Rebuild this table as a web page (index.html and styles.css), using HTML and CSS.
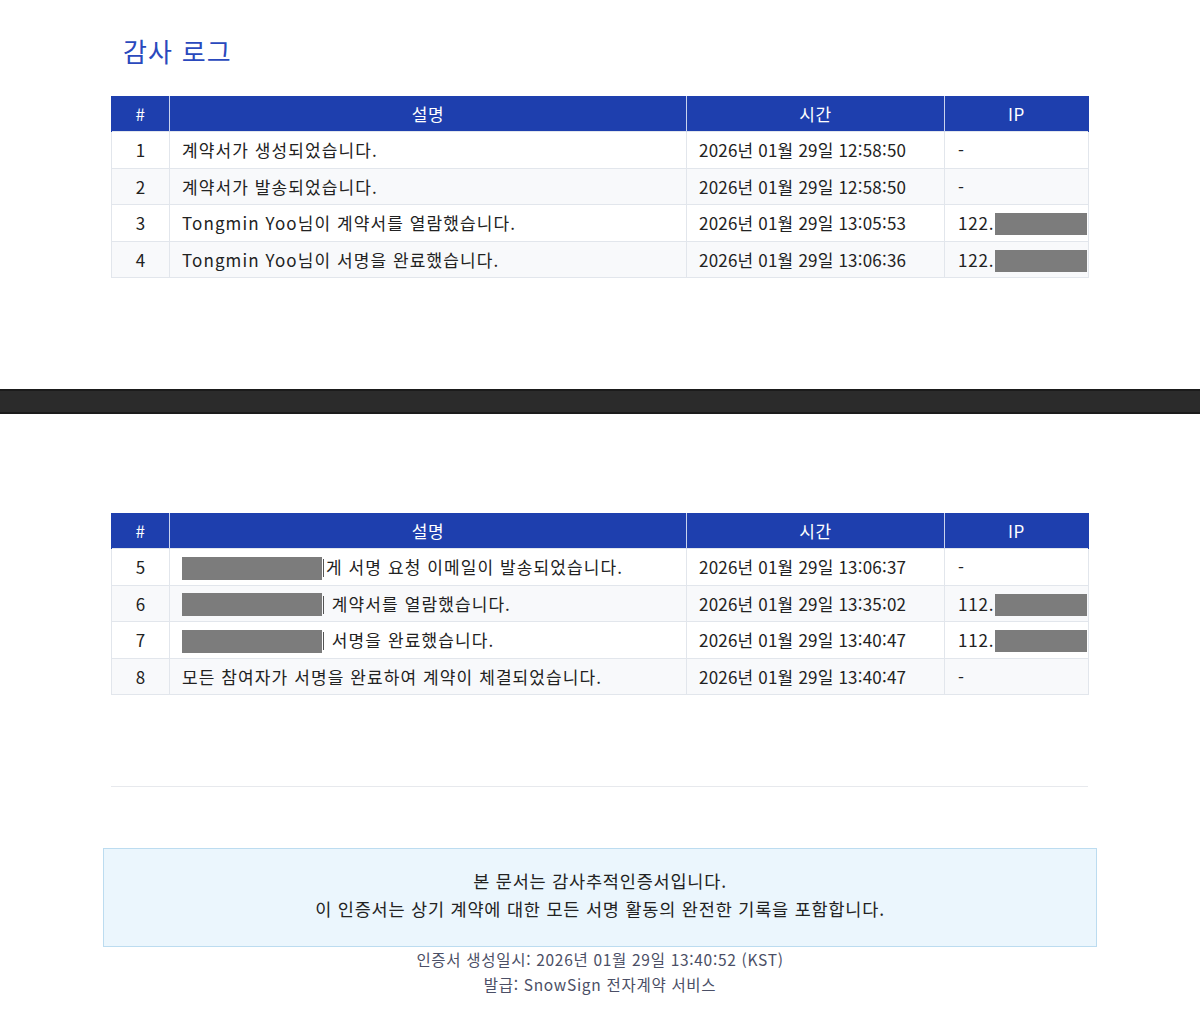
FILE: index.html
```html
<!DOCTYPE html>
<html lang="ko">
<head>
<meta charset="utf-8">
<title>감사 로그</title>
<link rel="stylesheet" href="styles.css">
</head>
<body>
<section class="sheet sheet-top">
  <div class="content">
    <h2 class="title">감사 로그</h2>
    <table class="log">
      <colgroup><col class="c-num"><col class="c-desc"><col class="c-time"><col class="c-ip"></colgroup>
      <thead>
        <tr><th>#</th><th>설명</th><th>시간</th><th>IP</th></tr>
      </thead>
      <tbody>
        <tr><td class="num">1</td><td class="desc">계약서가 생성되었습니다.</td><td class="time">2026년 01월 29일 12:58:50</td><td class="ip">-</td></tr>
        <tr><td class="num">2</td><td class="desc">계약서가 발송되었습니다.</td><td class="time">2026년 01월 29일 12:58:50</td><td class="ip">-</td></tr>
        <tr><td class="num">3</td><td class="desc">Tongmin Yoo님이 계약서를 열람했습니다.</td><td class="time">2026년 01월 29일 13:05:53</td><td class="ip">122.<span class="redact ip-redact"></span></td></tr>
        <tr><td class="num">4</td><td class="desc">Tongmin Yoo님이 서명을 완료했습니다.</td><td class="time">2026년 01월 29일 13:06:36</td><td class="ip">122.<span class="redact ip-redact"></span></td></tr>
      </tbody>
    </table>
  </div>
</section>
<div class="page-break"></div>
<section class="sheet sheet-bottom">
  <div class="content">
    <table class="log">
      <colgroup><col class="c-num"><col class="c-desc"><col class="c-time"><col class="c-ip"></colgroup>
      <thead>
        <tr><th>#</th><th>설명</th><th>시간</th><th>IP</th></tr>
      </thead>
      <tbody>
        <tr><td class="num">5</td><td class="desc"><span class="redact name-redact"></span><span class="frag"></span>게 서명 요청 이메일이 발송되었습니다.</td><td class="time">2026년 01월 29일 13:06:37</td><td class="ip">-</td></tr>
        <tr><td class="num">6</td><td class="desc"><span class="redact name-redact"></span><span class="frag"></span> 계약서를 열람했습니다.</td><td class="time">2026년 01월 29일 13:35:02</td><td class="ip">112.<span class="redact ip-redact"></span></td></tr>
        <tr><td class="num">7</td><td class="desc"><span class="redact name-redact"></span><span class="frag"></span> 서명을 완료했습니다.</td><td class="time">2026년 01월 29일 13:40:47</td><td class="ip">112.<span class="redact ip-redact"></span></td></tr>
        <tr><td class="num">8</td><td class="desc">모든 참여자가 서명을 완료하여 계약이 체결되었습니다.</td><td class="time">2026년 01월 29일 13:40:47</td><td class="ip">-</td></tr>
      </tbody>
    </table>
    <hr class="divider">
  </div>
  <div class="notice">
    <p>본 문서는 감사추적인증서입니다.</p>
    <p>이 인증서는 상기 계약에 대한 모든 서명 활동의 완전한 기록을 포함합니다.</p>
  </div>
  <div class="meta">
    <p>인증서 생성일시: 2026년 01월 29일 13:40:52 (KST)</p>
    <p>발급: SnowSign 전자계약 서비스</p>
  </div>
</section>
</body>
</html>
```

FILE: styles.css
```css
* { box-sizing: border-box; }

html, body {
  margin: 0;
  padding: 0;
  background: #ffffff;
}

body {
  font-family: "Noto Sans CJK KR", "Noto Sans", sans-serif;
  color: #222;
}

.sheet {
  background: #fff;
}

.sheet-top {
  height: 389px;
  padding-top: 35px;
}

.content {
  width: 977px;
  margin: 0 0 0 111px;
}

.title {
  margin: 0 0 0 12px;
  font-size: 26px;
  line-height: 32px;
  font-weight: 400;
  letter-spacing: 1.2px;
  color: #2a49bd;
}

.log {
  margin-top: 29px;
  width: 977px;
  border-collapse: collapse;
  table-layout: fixed;
  font-size: 17px;
}

.sheet-bottom .log {
  margin-top: 0;
}

.c-num { width: 58px; }
.c-desc { width: 517px; }
.c-time { width: 258px; }
.c-ip { width: 144px; }

.log th {
  background: #1e3fae;
  color: #fff;
  font-weight: 400;
  height: 35px;
  line-height: 35px;
  padding: 0;
  text-align: center;
  letter-spacing: 0.6px;
  border-left: 1px solid #c9d3ee;
  border-right: 1px solid #c9d3ee;
}

.log th:first-child { border-left: 1px solid #1e3fae; }
.log th:last-child { border-right: 1px solid #1e3fae; }

.log td {
  height: 36.5px;
  line-height: 35px;
  padding: 0 0 0 12px;
  border: 1px solid #e2e6ec;
  white-space: nowrap;
  overflow: hidden;
  vertical-align: middle;
}

.log td.desc {
  letter-spacing: 1.1px;
}

.log td.time {
  letter-spacing: 0.2px;
}

.log tbody tr:nth-child(even) td {
  background: #f8f9fb;
}

.log td.num {
  padding: 0;
  text-align: center;
}

.log td.ip {
  padding-left: 13px;
  padding-right: 0;
  letter-spacing: 0.8px;
}

.redact {
  display: inline-block;
  background: #7c7c7c;
  vertical-align: middle;
}

.ip-redact {
  width: 92px;
  height: 22px;
  margin-left: 1px;
  margin-top: -3px;
}

.name-redact {
  width: 140px;
  height: 23px;
  margin-top: -3px;
}

.frag {
  display: inline-block;
  width: 1px;
  height: 18px;
  background: #555;
  margin-left: 1px;
  margin-right: 2px;
  vertical-align: middle;
  margin-top: -3px;
}

.page-break {
  height: 25px;
  background: #2b2b2b;
  border-top: 2px solid #1b1b1b;
  border-bottom: 2px solid #1b1b1b;
}

.sheet-bottom {
  padding-top: 99px;
  padding-bottom: 40px;
}

.divider {
  margin: 91px 0 0;
  border: 0;
  border-top: 1px solid #e7e9ed;
  height: 0;
}

.notice {
  width: 994px;
  margin: 61px 0 0 103px;
  height: 99px;
  background: #ebf6fd;
  border: 1px solid #bcdcf0;
  padding-top: 18px;
  text-align: center;
  font-size: 17.5px;
  letter-spacing: 0.8px;
  color: #222;
}

.notice p {
  margin: 0;
  line-height: 28px;
}

.meta {
  text-align: center;
  font-size: 15.5px;
  letter-spacing: 0.7px;
  color: #4b4f66;
}

.meta p {
  margin: 0;
  line-height: 25px;
}
```
